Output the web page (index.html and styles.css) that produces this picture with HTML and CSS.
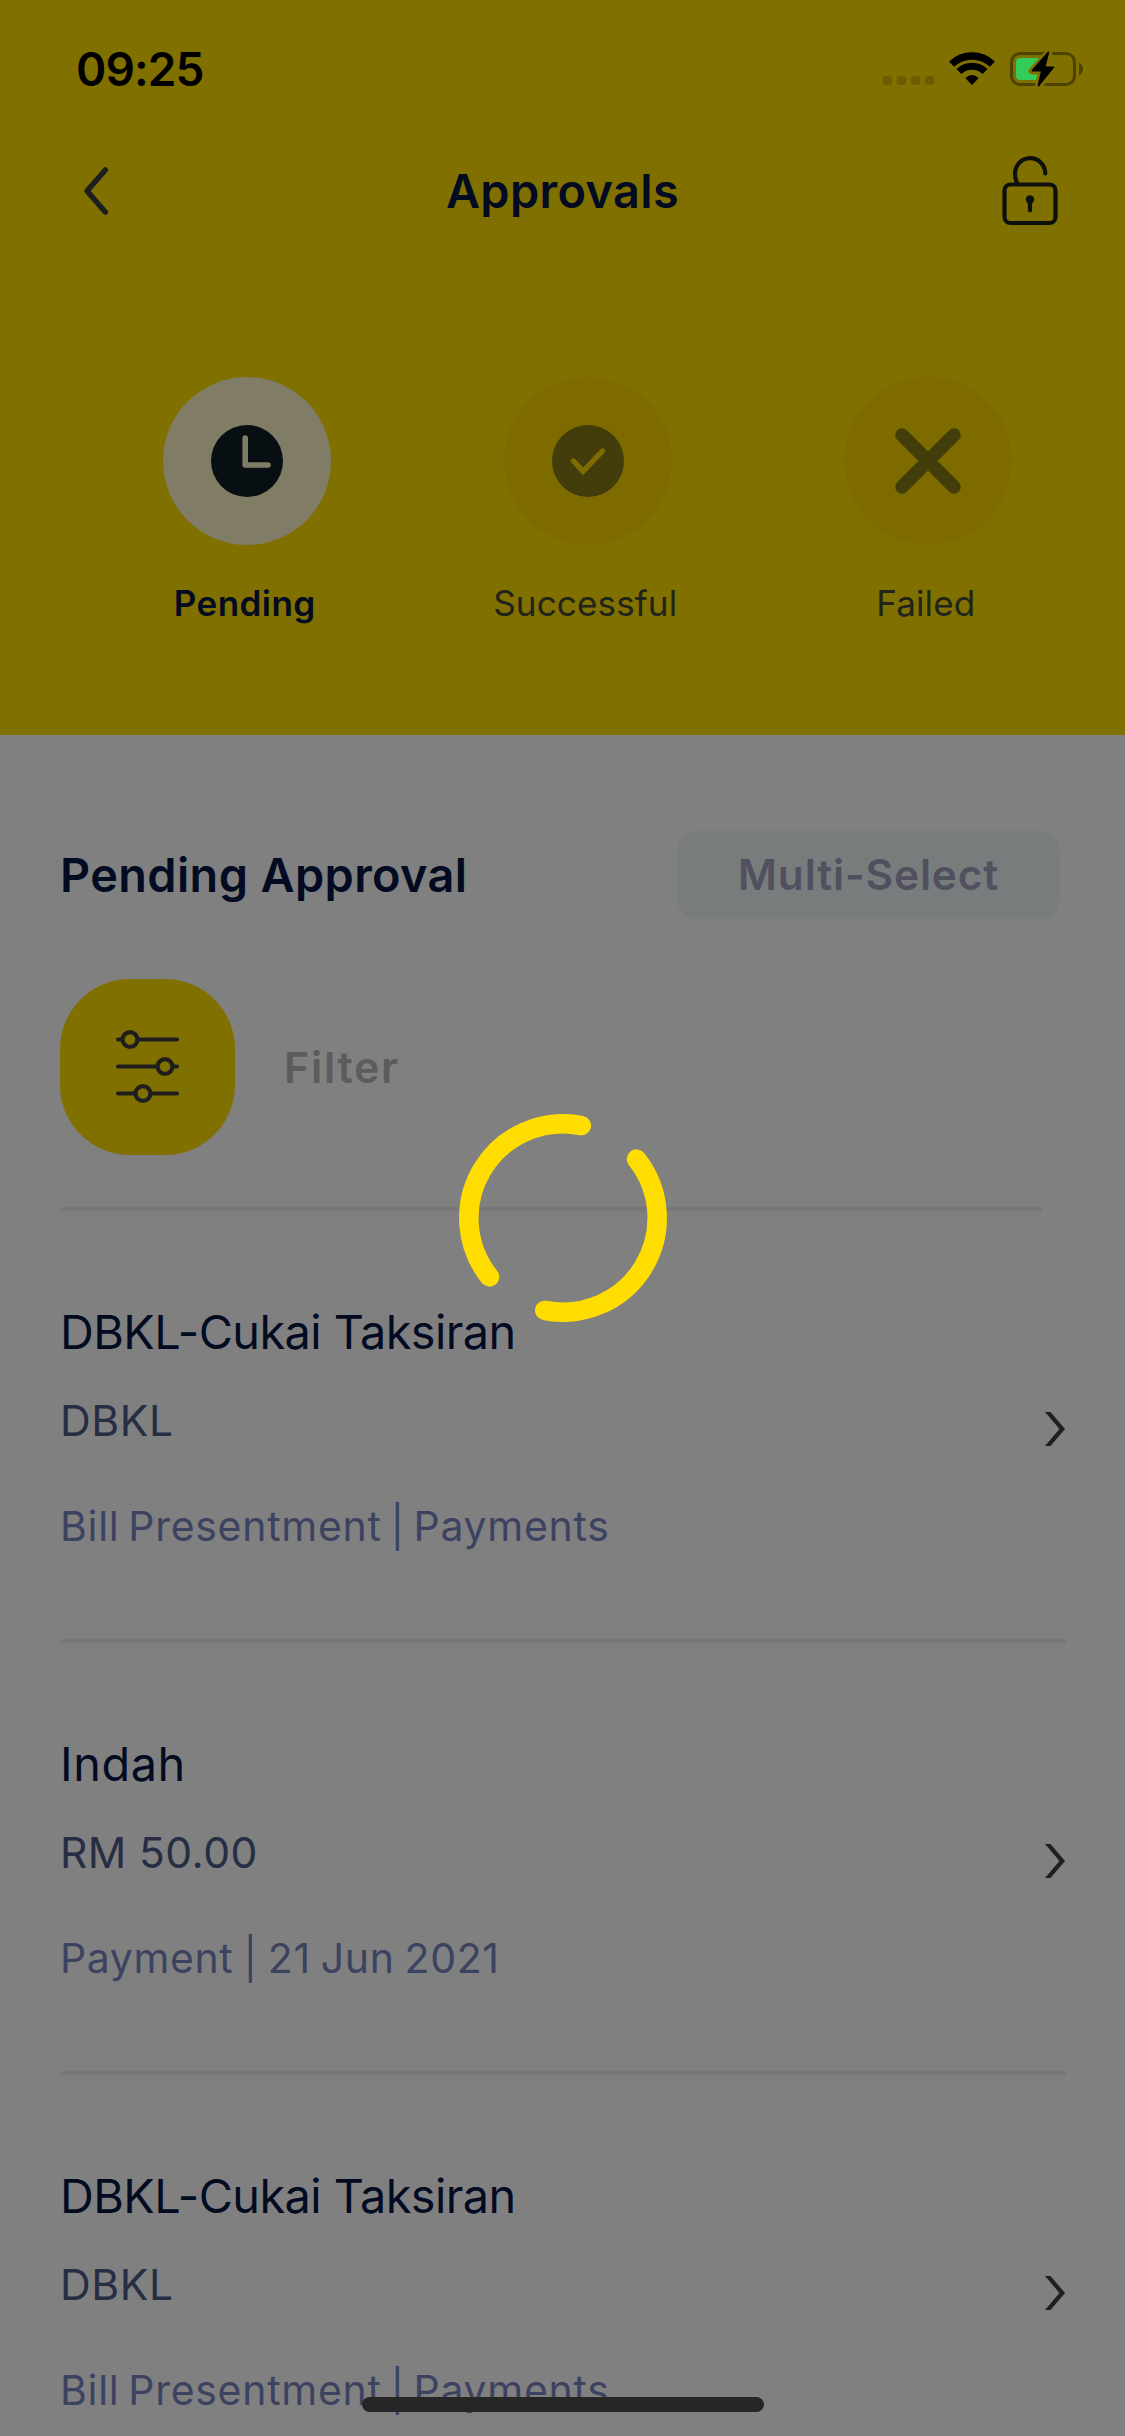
FILE: index.html
```html
<!DOCTYPE html>
<html lang="en">
<head>
<meta charset="utf-8">
<title>Approvals</title>
<link rel="stylesheet" href="styles.css">
</head>
<body>
<div class="screen">
  <header class="header">
    <div class="status">
      <span class="time">09:25</span>
      <svg class="status-icons" viewBox="880 48 206 42" width="206" height="42">
        <g fill="#6a5d00">
          <rect x="882.5" y="76" width="9.5" height="9" rx="3.5"/>
          <rect x="896.7" y="76" width="9.5" height="9" rx="3.5"/>
          <rect x="910.8" y="76" width="9.5" height="9" rx="3.5"/>
          <rect x="924.8" y="76" width="9.5" height="9" rx="3.5"/>
        </g>
        <g fill="none" stroke="#000">
          <path stroke-width="7.4" d="M951.6 64.2A29.3 29.3 0 0 1 992.4 64.2"/>
          <path stroke-width="7" d="M959 71.6A18.7 18.7 0 0 1 985 71.6"/>
        </g>
        <path d="M965.3 78.1Q972 72 978.7 78.1L972 85Z"/>
        <rect x="1011.5" y="53.5" width="63" height="31" rx="8.5" fill="none" stroke="#4d4400" stroke-width="3"/>
        <path d="M1079 62.5Q1083 65 1083 69T1079 75.5Z" fill="#4d4400"/>
        <rect x="1016" y="58" width="27" height="22" rx="4" fill="#33cc59"/>
        <path d="M1049 52L1032 71H1041.5L1038.5 86L1054 67H1045Z" fill="#000" stroke="#807000" stroke-width="7" stroke-linejoin="round"/>
        <path d="M1048.3 52.5L1032.5 70.5H1042L1038.5 85.5L1053.3 67.3H1044.5Z" fill="#000" stroke="#000" stroke-width="1.8" stroke-linejoin="round"/>
      </svg>
    </div>
    <nav class="nav">
      <svg class="back" viewBox="80 163 32 56" width="32" height="56"><path d="M105.3 170L87 191L105.3 212" fill="none" stroke="#1c1e1f" stroke-width="5.5" stroke-linecap="round" stroke-linejoin="round"/></svg>
      <h1 class="title">Approvals</h1>
      <svg class="lock" viewBox="1000 155 60 72" width="60" height="72" fill="none" stroke="#0e100e" stroke-width="4.2" stroke-linecap="round">
        <rect x="1004.5" y="184.5" width="51" height="38.5" rx="6"/>
        <path d="M1017 183Q1015 178 1015 174A15 15.5 0 0 1 1045.3 173.5"/>
        <circle cx="1030" cy="199.5" r="4.2" fill="#0e100e" stroke="none"/>
        <path d="M1030 200V210.3"/>
      </svg>
    </nav>
    <div class="tabs">
      <div class="tab active">
        <div class="disc"><svg viewBox="-36 -36 72 72" width="72" height="72"><circle r="36" fill="#080f13"/><path d="M-1.8 -23V4H21" fill="none" stroke="#807c66" stroke-width="5.6" stroke-linecap="round" stroke-linejoin="round"/></svg></div>
        <span class="label">Pending</span>
      </div>
      <div class="tab">
        <div class="disc"><svg viewBox="-36 -36 72 72" width="72" height="72"><circle r="36" fill="#433c0b"/><path d="M-14.5 0L-5 10.3L14.5 -10" fill="none" stroke="#7e6c00" stroke-width="5.4" stroke-linecap="round" stroke-linejoin="miter"/></svg></div>
        <span class="label">Successful</span>
      </div>
      <div class="tab">
        <div class="disc"><svg viewBox="-36 -36 72 72" width="72" height="72"><path d="M-26 -26L26 26M26 -26L-26 26" stroke="#433c0b" stroke-width="13.5" stroke-linecap="round"/></svg></div>
        <span class="label">Failed</span>
      </div>
    </div>
  </header>

  <main class="content">
    <div class="heading">
      <h2 class="section">Pending Approval</h2>
      <button class="multi">Multi-Select</button>
    </div>
    <div class="filter">
      <div class="filter-btn">
        <svg viewBox="-33.5 -41.5 68 84" width="68" height="84" stroke="#1f1e1c" stroke-width="4.2" stroke-linecap="round" fill="#807000">
          <path d="M-29.5 -27H29.5M-29.5 0H29.5M-29.5 27H29.5"/>
          <circle cx="-17.5" cy="-27" r="7.4"/>
          <circle cx="17.5" cy="0" r="7.4"/>
          <circle cx="-4.5" cy="27" r="7.4"/>
        </svg>
      </div>
      <span class="filter-label">Filter</span>
    </div>
    <div class="rule"></div>
    <ul class="list">
      <li class="row">
        <div class="details">
          <div class="name">DBKL-Cukai Taksiran</div>
          <div class="amount org">DBKL</div>
          <div class="meta">Bill Presentment | Payments</div>
        </div>
        <svg class="chevron" viewBox="0 0 20 34" width="20" height="34"><path d="M0 0H5.5L20 17L5.5 34H0L14.5 17Z"/></svg>
      </li>
      <li class="row">
        <div class="details">
          <div class="name short">Indah</div>
          <div class="amount">RM 50.00</div>
          <div class="meta dated">Payment | 21 Jun 2021</div>
        </div>
        <svg class="chevron" viewBox="0 0 20 34" width="20" height="34"><path d="M0 0H5.5L20 17L5.5 34H0L14.5 17Z"/></svg>
      </li>
      <li class="row">
        <div class="details">
          <div class="name">DBKL-Cukai Taksiran</div>
          <div class="amount org">DBKL</div>
          <div class="meta">Bill Presentment | Payments</div>
        </div>
        <svg class="chevron" viewBox="0 0 20 34" width="20" height="34"><path d="M0 0H5.5L20 17L5.5 34H0L14.5 17Z"/></svg>
      </li>
    </ul>
  </main>

  <svg class="spinner" viewBox="-104 -104 208 208" width="208" height="208"><path d="M18.3 -92.4A94.2 94.2 0 0 0 -73.5 58.9M73.5 -58.9A94.2 94.2 0 0 1 -18.3 92.4" fill="none" stroke="#ffdd00" stroke-width="19.5" stroke-linecap="round"/></svg>
  <div class="home"></div>
</div>
</body>
</html>
```
FILE: styles.css
```css
* { box-sizing: border-box; margin: 0; padding: 0; }

body { background: #808080; font-family: Inter, "Liberation Sans", sans-serif; }

.screen { position: relative; width: 1125px; height: 2436px; overflow: hidden; background: #808080; }

svg { display: block; flex: none; }

/* Header */
.header { height: 735px; background: #807000; }

.status { display: flex; justify-content: space-between; align-items: center; height: 138px; padding: 0 39px 0 76px; }
.time { font-size: 46px; font-weight: 600; line-height: 60px; letter-spacing: -0.9px; color: #000; }

.nav { display: grid; grid-template-columns: 100px 1fr 100px; align-items: center; height: 106px; padding: 0 65px 0 80px; }
.title { justify-self: center; padding-right: 15px; font-size: 46.8px; font-weight: 600; line-height: 60px; letter-spacing: 0.4px; color: #030b22; }
.lock { justify-self: end; }

.tabs { display: grid; grid-template-columns: repeat(3, 340.5px); padding: 133px 0 0 77px; }
.tab { display: flex; flex-direction: column; align-items: center; gap: 33px; color: #212419; }
.tab.active { color: #030b22; }
.disc { display: flex; align-items: center; justify-content: center; width: 168px; height: 168px; border-radius: 50%; background: #7e6b00; }
.active .disc { background: #807c66; }
.label { padding-right: 5px; font-size: 35.1px; line-height: 50px; letter-spacing: 0.1px; }
.active .label { font-weight: 600; letter-spacing: 0.4px; }

/* Content */
.content { padding: 96px 60px 0; }

.heading { display: flex; justify-content: space-between; align-items: center; height: 88px; padding-right: 5px; }
.section { font-size: 46.8px; font-weight: 600; line-height: 60px; letter-spacing: 0.4px; color: #030b22; }
.multi { width: 383px; height: 88px; border: 0; border-radius: 20px; background: #797c7d; font: 600 42.5px/60px Inter, "Liberation Sans", sans-serif; letter-spacing: 0.8px; color: #51505f; }

.filter { display: flex; align-items: center; gap: 49px; margin-top: 60px; height: 176px; }
.filter-btn { display: flex; align-items: center; justify-content: center; width: 175px; height: 176px; border-radius: 70px; background: #807000; }
.filter-label { padding-bottom: 1px; font-size: 43px; font-weight: 600; line-height: 60px; letter-spacing: 1.7px; color: #5c5c5c; }

.rule { width: 982px; height: 4px; margin-top: 52px; border-radius: 2px; background: #777; }

.list { list-style: none; }
.row { display: flex; justify-content: space-between; width: 1006px; height: 432px; padding: 91px 1px 0 0; border-bottom: 4px solid #777; }
.name { font-size: 46.8px; line-height: 60px; letter-spacing: -0.55px; color: #030b22; }
.name.short { letter-spacing: 0.6px; }
.amount { margin-top: 29px; font-size: 42.6px; line-height: 60px; letter-spacing: 0.4px; color: #272e44; }
.amount.org { letter-spacing: 0.6px; }
.meta { margin-top: 50px; font-size: 41px; line-height: 50px; letter-spacing: 0.72px; word-spacing: -3.5px; color: #3c4360; }
.meta.dated { letter-spacing: 0.6px; word-spacing: -2px; }
.chevron { margin-top: 110px; fill: #1f1f1f; }

/* Overlays */
.spinner { position: absolute; left: 459px; top: 1113.5px; }
.home { position: absolute; left: 362px; top: 2397px; width: 402px; height: 15px; border-radius: 8px; background: #262626; }
```
